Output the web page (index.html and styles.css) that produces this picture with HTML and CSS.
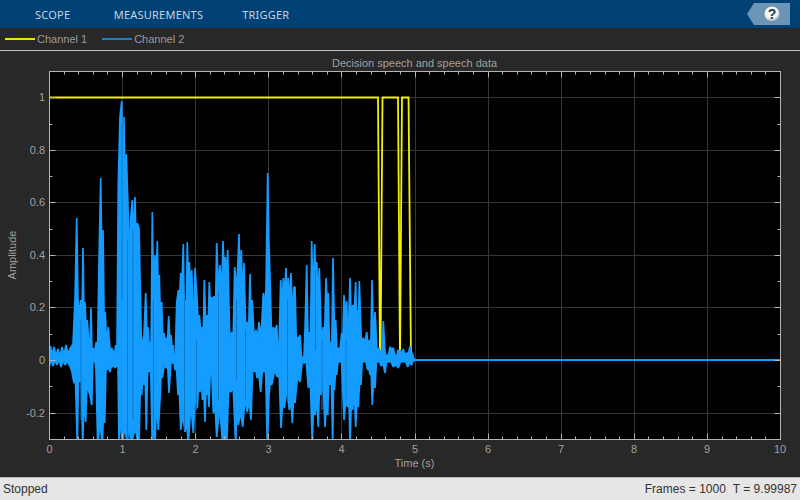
FILE: index.html
```html
<!DOCTYPE html>
<html lang="en">
<head>
<meta charset="utf-8">
<title>Scope</title>
<link rel="stylesheet" href="styles.css">
</head>
<body>
<div class="app">
  <header class="toolbar">
    <nav class="tabs">
      <span class="tab tab-scope">SCOPE</span>
      <span class="tab tab-meas">MEASUREMENTS</span>
      <span class="tab">TRIGGER</span>
    </nav>
    <div class="help">
      <svg class="help-shape" width="43" height="22" viewBox="0 0 43 22">
        <defs>
          <radialGradient id="ball" cx="0.45" cy="0.35" r="0.7">
            <stop offset="0" stop-color="#ffffff"/>
            <stop offset="0.65" stop-color="#eef0f3"/>
            <stop offset="1" stop-color="#7f8e9e"/>
          </radialGradient>
        </defs>
        <polygon class="help-bg" points="0,11 7,0 43,0 43,22 7,22"/>
        <circle cx="25" cy="11" r="7.5" fill="url(#ball)"/>
        <text class="help-mark" x="25" y="16">?</text>
      </svg>
    </div>
  </header>
  <div class="legend">
    <span class="legend-item"><i class="swatch swatch-one"></i>Channel 1</span>
    <span class="legend-item"><i class="swatch swatch-two"></i>Channel 2</span>
  </div>
  <main class="plot">
    <svg class="chart" width="800" height="426" viewBox="0 51 800 426">
      <rect class="axes-bg" x="49.5" y="71.5" width="731" height="368"/>
      <g id="grid"></g>
      <polyline class="ch1" points="49.5,97.5 378,97.5 380,360 380.5,360 382.5,97.5 398,97.5 400,360 402,97.5 408.5,97.5 411,360 416,360"/>
      <clipPath id="clip"><rect x="49.5" y="71.5" width="731" height="368"/></clipPath>
      <g clip-path="url(#clip)">
        <polygon id="ch2" class="ch2" points=""/>
        <g id="streaks"></g>
        <line class="ch2-flat" x1="414" y1="360" x2="780" y2="360"/>
      </g>
      <rect class="axes-box" x="49.5" y="71.5" width="731" height="368"/>
      <g id="ticks"></g>
      <text class="label mid" x="414.5" y="66.5">Decision speech and speech data</text>
      <g class="label end">
        <text x="45" y="101">1</text>
        <text x="45" y="154">0.8</text>
        <text x="45" y="206">0.6</text>
        <text x="45" y="259">0.4</text>
        <text x="45" y="311">0.2</text>
        <text x="45" y="364">0</text>
        <text x="45" y="417">-0.2</text>
      </g>
      <g class="label mid">
        <text x="49.5" y="453">0</text>
        <text x="122.5" y="453">1</text>
        <text x="195.5" y="453">2</text>
        <text x="268.5" y="453">3</text>
        <text x="341.5" y="453">4</text>
        <text x="415" y="453">5</text>
        <text x="488" y="453">6</text>
        <text x="561" y="453">7</text>
        <text x="634" y="453">8</text>
        <text x="707" y="453">9</text>
        <text x="780" y="453">10</text>
        <text x="414.5" y="467">Time (s)</text>
      </g>
      <text class="label mid" transform="translate(16 255) rotate(-90)">Amplitude</text>
    </svg>
  </main>
  <footer class="status">
    <span>Stopped</span>
    <span class="status-right"><span>Frames = 1000</span><span>T = 9.99987</span></span>
  </footer>
</div>
<script src="plot.js"></script>
</body>
</html>
```

FILE: styles.css
```css
html, body {
  margin: 0;
  padding: 0;
}
.app {
  width: 800px;
  height: 500px;
  display: flex;
  flex-direction: column;
  overflow: hidden;
  background: #282828;
  font-family: "Liberation Sans", Arial, sans-serif;
}
.toolbar {
  height: 28px;
  flex: none;
  background: #004275;
  display: flex;
  align-items: flex-start;
  justify-content: space-between;
}
.tabs {
  display: flex;
  padding-left: 35px;
  height: 28px;
  align-items: center;
  font-family: "Noto Sans", sans-serif;
  font-size: 11px;
  letter-spacing: 0.22px;
  color: #c4d4e2;
}
.tab-scope {
  margin-right: 43.5px;
}
.tab-meas {
  margin-right: 39px;
}
.help {
  margin: 3px 10px 0 0;
  height: 22px;
}
.help-shape {
  display: block;
}
.help-bg {
  fill: #6b94b6;
}
.help-mark {
  font-family: "Liberation Sans", sans-serif;
  font-weight: bold;
  font-size: 14px;
  fill: #26364a;
  text-anchor: middle;
}
.legend {
  height: 22px;
  flex: none;
  display: flex;
  align-items: center;
  padding-left: 5px;
  gap: 15px;
  font-size: 11px;
  color: #9b9b9b;
  border-bottom: 1px solid #c2c2c2;
}
.legend-item {
  display: flex;
  align-items: center;
  gap: 2px;
}
.swatch {
  display: block;
  width: 30px;
  height: 2px;
}
.swatch-one {
  background: #e8e800;
}
.swatch-two {
  background: #1a80c8;
}
.plot {
  flex: 1;
  min-height: 0;
}
.chart {
  display: block;
}
.axes-bg {
  fill: #000000;
}
.axes-box {
  fill: none;
  stroke: #b4b4b4;
  stroke-width: 1;
}
.grid-line {
  stroke: #363636;
  stroke-width: 1;
}
.tick {
  stroke: #b4b4b4;
  stroke-width: 1;
}
.ch1 {
  fill: none;
  stroke: #f2f200;
  stroke-width: 1.8;
}
.ch2 {
  fill: #159cff;
  stroke: #159cff;
  stroke-width: 1.7;
  stroke-linejoin: bevel;
}
.ch2-flat {
  stroke: #159cff;
  stroke-width: 2;
}
.streak {
  stroke: #0f78c4;
  stroke-width: 1;
}
.label {
  font-family: "Liberation Sans", sans-serif;
  font-size: 11px;
  fill: #a0a0a0;
}
.mid {
  text-anchor: middle;
}
.end {
  text-anchor: end;
}
.status {
  height: 23px;
  flex: none;
  box-sizing: border-box;
  background: #e6e6e6;
  border-top: 1px solid #b9b9b9;
  display: flex;
  align-items: center;
  justify-content: space-between;
  padding: 0 3px;
  font-size: 12px;
  color: #333333;
}
.status-right {
  display: flex;
  gap: 7px;
}
```

FILE: plot.js
```js
var NS = "http://www.w3.org/2000/svg";

var TOP = [[49,350],[50.5,346],[52,356],[54,347],[56,356],[58,349],[60,357],[62,347],[64,355],[66,345],[68,354],[70,349],[73,344],
  [75,300],[76.7,218],[78,300],[80.7,300],[83,248],[85,302],[87.3,320],[89,345],[91,308],[93,348],[96.3,342],[99,262],[100.7,178],[103,230],[105.3,312],[106.5,345],[108.3,327],[110,350],[111.7,348],[113.5,352],[115.7,345],[117,350],
  [118.3,183],[120,117],[121.7,101],[124,117],[126.3,154],[128,207],[130.7,218],[132.3,200],[135,197],[137.3,223],[139,228],[140.5,300],[142.3,343],[144,335],[145.7,293],[148,327],[150,342],[152.3,212],[155,255],[157.3,241],[159.3,275],[161.7,302],[164,333],[166.3,338],[168.7,316],[171,335],[173,345],
  [175,365],[176.7,303],[178.3,290],[180.7,273],[183.3,244],[185.3,300],[187.3,242],[189.3,262],[191.7,270],[193,310],[195,268],[196.7,292],[199.3,315],[202.3,327],[204.3,280],[207,315],[209.3,282],[211.7,297],[214,296],[216.7,243],[220,265],[221.5,300],[223,241],[225.3,257],[227.7,250],[231.7,332],[234.7,267],[239,234],[241.3,250],[244,263],[247.3,322],[250,274],[252.3,300],[256,330],[259,322],[263.3,293],[266,290],[267.7,173],[268.8,240],[270,278],[273.3,327],[276.7,325],[279,350],[280.7,280],[283.3,278],[286,268],[288.3,278],[291,273],[294,287],
  [295,287],[297.7,337],[300,335],[303,357],[305,330],[306.7,265],[309.3,332],[311.7,241],[313,300],[314.7,244],[316.7,262],[319.3,268],[323.3,327],[326,278],[328.3,293],[330.7,342],[333,258],[335.7,320],[338.3,348],[341.7,333],[344,295],[345.5,320],[346.7,301],[348.5,330],[350,278],[352.7,305],[355.7,282],[357.5,310],[359.3,281],[363.3,338],[366.7,332],[369.7,340],[372,280],[373.5,345],[375,312],[379,348],[381.5,350],[383.3,321],[384.8,350],[386.7,355],[390,347],[393.3,348],[396,355],[398,350],[400,350],[403.3,349],[406.7,353],[410,346],[412.3,353],[415,359]];

var BOTTOM = [[49,368],[51,359],[53,366],[55,360],[57,365],[59,359],[61,367],[63,360],[65,365],[67,361],[70,366],[72,372],[74,383],
  [75.5,380],[77.3,445],[79.7,382],[82.7,445],[85.7,422],[88.3,390],[90,395],[91.7,405],[94,362],[96,370],[97.7,445],[102.3,445],[104.7,423],[107.3,370],[110,372],[112.3,367],[115,368],[117,367],
  [119,445],[122.3,445],[127.3,445],[131,445],[139,445],[141.7,395],[144,385],[146.3,430],[149,372],[152.3,445],[155,445],[158.3,430],[160,400],[162.3,378],[166.3,368],[169,393],[173,363],
  [175,370],[178,395],[180.7,430],[185,432],[188.3,445],[193.3,433],[197.3,408],[200,392],[202.5,400],[205,422],[207,395],[209,407],[211.7,370],[213.3,413],[216.7,437],[222.7,445],[226.7,445],[230.7,392],[235.7,445],[238.3,425],[242.7,427],[247.3,412],[251,420],[254.3,372],[257,378],[260.7,392],[264,372],[267.3,445],[269,395],[271.7,385],[277.3,377],[281,428],[284.3,408],[289.3,410],[292.3,423],
  [295,403],[300,382],[304.3,363],[308.3,388],[312.3,445],[315,415],[318.3,427],[321,395],[325,427],[327.7,415],[330,385],[332.7,445],[334.5,390],[336.7,375],[339.3,362],[344,420],[347.7,407],[350,445],[352.7,410],[355.7,427],[358.3,407],[361,385],[363.3,362],[367.7,370],[370,375],[372.3,405],[375,388],[378,362],[381,366],[385,373],[388.3,362],[393.3,367],[398.3,368],[403.3,362],[407.7,367],[411.7,365],[414.3,361]];

/* Darker overdraw seen inside the dense parts of the trace: [x, y1, y2]. */
var STREAKS = [[81,320,420],[122,125,300],[127.5,240,440],[133,230,420],[153.5,300,430],[184.5,300,430],[196.5,340,410],[218.5,290,400],[236.5,300,380],[245.5,330,400],[287.5,300,400],[315.5,270,350],[322,340,410],[346,340,400]];

function line(parent, cls, x1, y1, x2, y2) {
  var el = document.createElementNS(NS, "line");
  el.setAttribute("class", cls);
  el.setAttribute("x1", x1);
  el.setAttribute("y1", y1);
  el.setAttribute("x2", x2);
  el.setAttribute("y2", y2);
  parent.appendChild(el);
}

/* The trace swings sample by sample, so between read peaks it falls back toward zero in narrow notches. */
function jagged(points) {
  var out = [];
  points.forEach(function (p, i) {
    out.push(p);
    var q = points[i + 1];
    if (!q || p[0] < 74 || q[0] - p[0] < 1.8) return;
    var shallow = Math.abs(p[1] - 358) < Math.abs(q[1] - 358) ? p[1] : q[1];
    var s = Math.sin(i * 12.9898) * 43758.5453;
    var depth = 0.12 + 0.33 * (s - Math.floor(s));
    var notch = shallow + (358 - shallow) * depth;
    out.push([(p[0] + q[0]) / 2, notch]);
  });
  return out;
}

var grid = document.getElementById("grid");
var ticks = document.getElementById("ticks");
var streaks = document.getElementById("streaks");
var L = 49.5, R = 780.5, T = 71.5, B = 439.5;

for (var m = 1; m < 50; m++) {
  var px = Math.round(49 + 14.62 * m) + 0.5;
  var major = m % 5 === 0;
  if (major) line(grid, "grid-line", px, T, px, B);
  var len = major ? 6 : 3;
  line(ticks, "tick", px, B, px, B - len);
  line(ticks, "tick", px, T, px, T + len);
}
for (var n = -2; n <= 10; n++) {
  var py = Math.round(360 - 26.27 * n) + 0.5;
  var big = (n + 20) % 2 === 0;
  if (big) line(grid, "grid-line", L, py, R, py);
  var l2 = big ? 6 : 3;
  line(ticks, "tick", L, py, L + l2, py);
  line(ticks, "tick", R, py, R - l2, py);
}

document.getElementById("ch2").setAttribute("points",
  jagged(TOP).concat(jagged(BOTTOM).reverse()).map(function (p) { return p[0] + "," + p[1].toFixed(1); }).join(" "));
STREAKS.forEach(function (s) { line(streaks, "streak", s[0], s[1], s[0], s[2]); });
```
